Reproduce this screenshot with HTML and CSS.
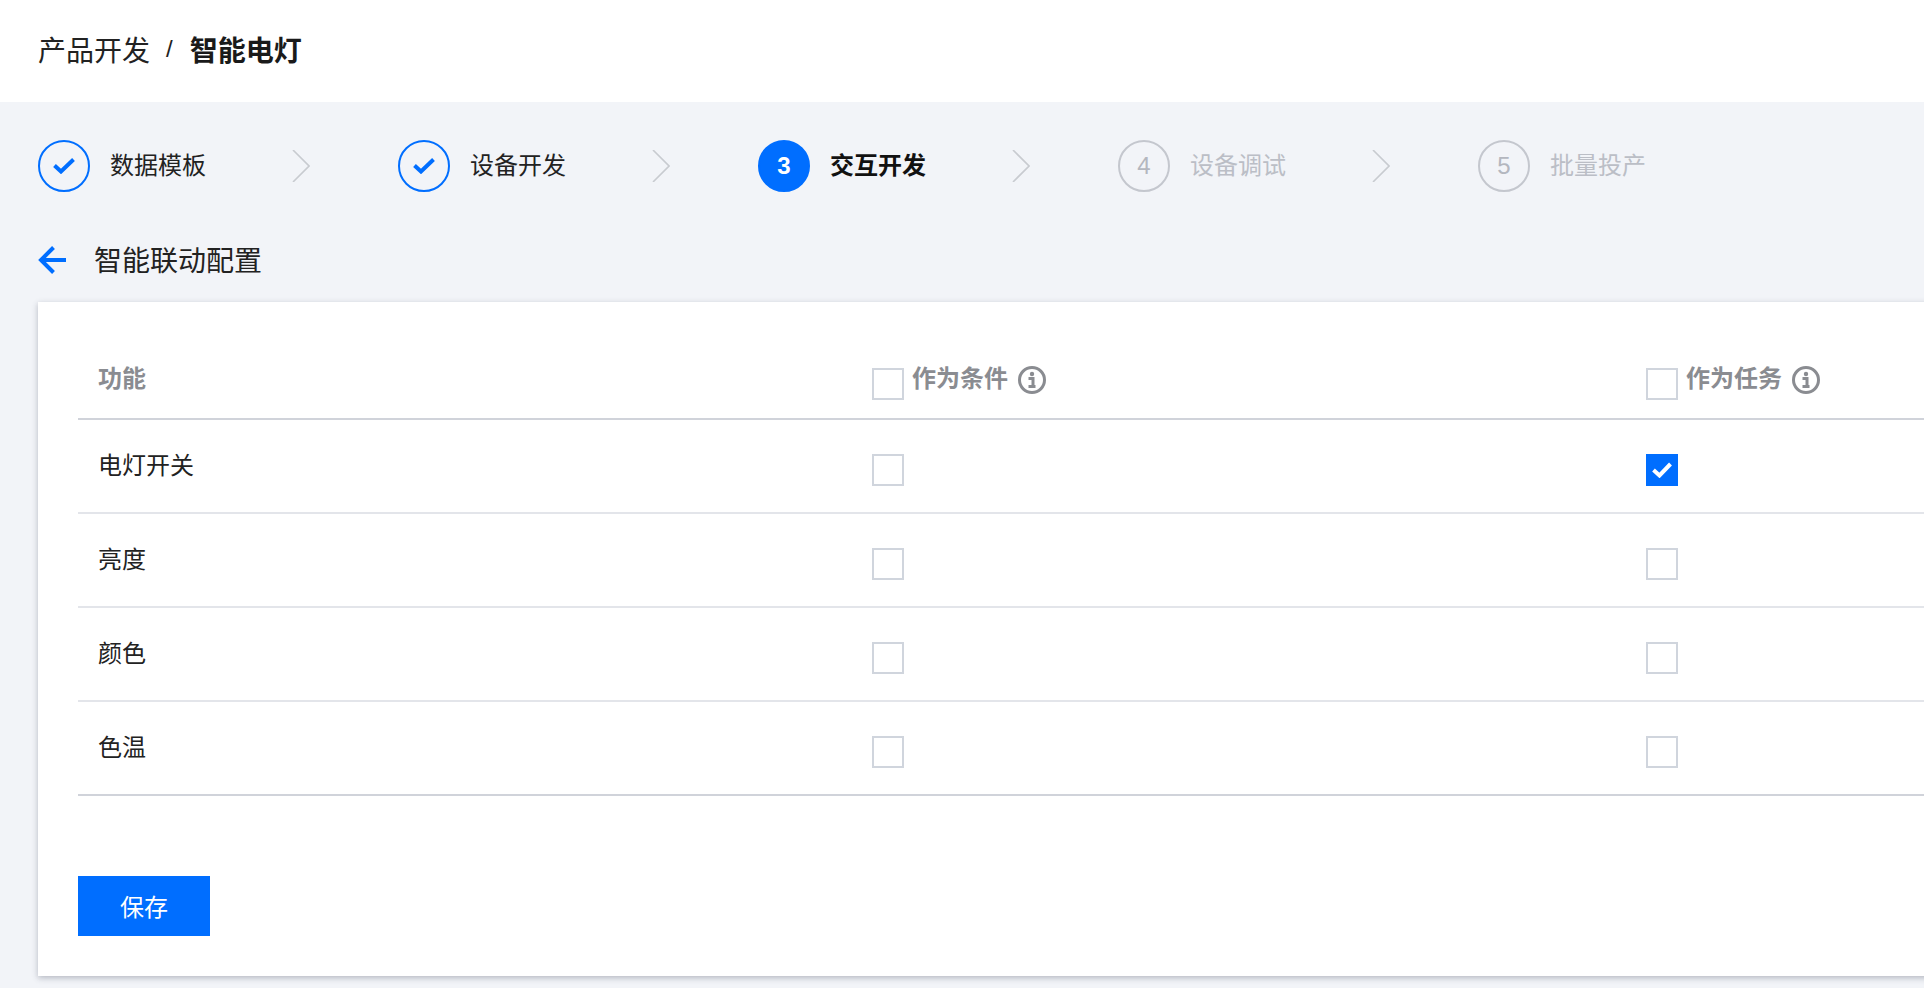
FILE: index.html
```html
<!DOCTYPE html>
<html lang="zh-CN">
<head>
<meta charset="utf-8">
<title>智能联动配置</title>
<link rel="stylesheet" href="styles.css">
</head>
<body>
<header class="topbar">
  <span class="crumb">产品开发</span>
  <span class="crumb-sep">/</span>
  <span class="crumb-current">智能电灯</span>
</header>
<main class="content">
  <ol class="steps">
    <li class="step done">
      <span class="step-mark"><svg class="tick" viewBox="0 0 22 16"><path d="M1.5 7.5l6.5 6L20.5 1.5" /></svg></span>
      <span class="step-label">数据模板</span>
      <svg class="chevron" viewBox="0 0 18 32"><path d="M1 0l16 16L1 32" /></svg>
    </li>
    <li class="step done">
      <span class="step-mark"><svg class="tick" viewBox="0 0 22 16"><path d="M1.5 7.5l6.5 6L20.5 1.5" /></svg></span>
      <span class="step-label">设备开发</span>
      <svg class="chevron" viewBox="0 0 18 32"><path d="M1 0l16 16L1 32" /></svg>
    </li>
    <li class="step active">
      <span class="step-mark">3</span>
      <span class="step-label">交互开发</span>
      <svg class="chevron" viewBox="0 0 18 32"><path d="M1 0l16 16L1 32" /></svg>
    </li>
    <li class="step">
      <span class="step-mark">4</span>
      <span class="step-label">设备调试</span>
      <svg class="chevron" viewBox="0 0 18 32"><path d="M1 0l16 16L1 32" /></svg>
    </li>
    <li class="step">
      <span class="step-mark">5</span>
      <span class="step-label">批量投产</span>
    </li>
  </ol>
  <div class="title-row">
    <svg class="back" viewBox="0 0 28 28"><path d="M28 14H4M15.5 1.5L3 14l12.5 12.5" /></svg>
    <h1 class="title">智能联动配置</h1>
  </div>
  <section class="card">
    <div class="table">
      <div class="row head">
        <div class="cell"><span class="head-label">功能</span></div>
        <div class="cell">
          <span class="box"></span><span class="head-label">作为条件</span>
          <svg class="info" viewBox="0 0 28 28"><circle cx="14" cy="14" r="12.5" /><circle class="dot" cx="14" cy="8" r="2.2" /><path d="M10.5 12.5H15V20.5M10.5 20.5h7" /></svg>
        </div>
        <div class="cell">
          <span class="box"></span><span class="head-label">作为任务</span>
          <svg class="info" viewBox="0 0 28 28"><circle cx="14" cy="14" r="12.5" /><circle class="dot" cx="14" cy="8" r="2.2" /><path d="M10.5 12.5H15V20.5M10.5 20.5h7" /></svg>
        </div>
      </div>
      <div class="row">
        <div class="cell"><span class="name">电灯开关</span></div>
        <div class="cell"><span class="box"></span></div>
        <div class="cell"><span class="box checked"><svg class="box-tick" viewBox="0 0 20 16"><path d="M1.5 8l6 5.5L18.5 2" /></svg></span></div>
      </div>
      <div class="row">
        <div class="cell"><span class="name">亮度</span></div>
        <div class="cell"><span class="box"></span></div>
        <div class="cell"><span class="box"></span></div>
      </div>
      <div class="row">
        <div class="cell"><span class="name">颜色</span></div>
        <div class="cell"><span class="box"></span></div>
        <div class="cell"><span class="box"></span></div>
      </div>
      <div class="row last">
        <div class="cell"><span class="name">色温</span></div>
        <div class="cell"><span class="box"></span></div>
        <div class="cell"><span class="box"></span></div>
      </div>
    </div>
    <button class="save" type="button">保存</button>
  </section>
</main>
</body>
</html>
```

FILE: styles.css
```css
* { box-sizing: border-box; }

html, body {
  margin: 0;
  height: 988px;
  overflow: hidden;
}

body {
  background: #f2f4f8;
  color: #222;
  font-family: "Noto Sans CJK SC", "Liberation Sans", sans-serif;
  font-size: 24px;
}

.topbar {
  height: 102px;
  background: #fff;
  display: flex;
  align-items: center;
  padding: 0 0 4px 38px;
  font-size: 28px;
  line-height: 40px;
}

.crumb { color: #222; }
.crumb-sep { margin: 0 17px 0 16px; font-size: 24px; font-family: "Liberation Sans", sans-serif; }
.crumb-current { font-weight: 700; color: #1a1a1a; }

.content { padding-left: 38px; }

.steps {
  list-style: none;
  margin: 0;
  padding: 38px 0 0;
  display: flex;
}

.step {
  width: 360px;
  flex: none;
  display: flex;
  align-items: center;
  height: 52px;
  color: #bbbec6;
}

.step-mark {
  width: 52px;
  height: 52px;
  border: 2px solid #c4c7ce;
  border-radius: 50%;
  display: flex;
  align-items: center;
  justify-content: center;
  font-family: "Liberation Sans", sans-serif;
  font-weight: 400;
  font-size: 24px;
  color: #b4b7bf;
  flex: none;
}

.step-label {
  margin: 0 0 4px 20px;
  width: 96px;
  flex: none;
  line-height: 34px;
}

.chevron {
  width: 18px;
  height: 32px;
  margin-left: 86px;
  fill: none;
  stroke: #c8cbd0;
  stroke-width: 1.6;
}

.step.done { color: #222; }
.step.done .step-mark { border-color: #006eff; }
.step.active { color: #111; }
.step.active .step-label { font-weight: 700; }
.step.active .step-mark { background: #006eff; border-color: #006eff; color: #fff; font-weight: 700; }

.tick { width: 22px; height: 16px; fill: none; stroke: #006eff; stroke-width: 4; }

.title-row {
  display: flex;
  align-items: center;
  height: 40px;
  margin-top: 48px;
}

.back { width: 28px; height: 28px; fill: none; stroke: #006eff; stroke-width: 4; flex: none; }
.title { margin: 0 0 2px 28px; font-size: 28px; font-weight: 400; line-height: 40px; color: #222; }

.card {
  margin-top: 22px;
  height: 674px;
  width: 1900px;
  background: #fff;
  box-shadow: 0 2px 6px rgba(54, 58, 80, 0.32);
  padding-left: 40px;
}

.table { width: 2322px; }

.row {
  display: grid;
  grid-template-columns: repeat(3, 774px);
  height: 94px;
  border-bottom: 2px solid #e3e5ea;
}

.row.head {
  height: 118px;
  border-bottom-color: #d0d3da;
  color: #8a8c91;
  font-weight: 700;
}

.row.last { border-bottom-color: #d0d3da; }

.cell {
  display: flex;
  align-items: center;
  padding-left: 20px;
}

.row.head .cell { padding-top: 38px; }

.name { margin-bottom: 5px; color: #222; }

.box {
  width: 32px;
  height: 32px;
  border: 2px solid #d0d5dd;
  background: #fff;
  flex: none;
  display: flex;
  align-items: center;
  justify-content: center;
  margin-top: 8px;
}

.row.head .box { margin: 10px 8px 0 0; }

.box.checked { background: #006eff; border-color: #006eff; }
.box-tick { width: 20px; height: 16px; fill: none; stroke: #fff; stroke-width: 4; flex: none; }

.head-label { margin-bottom: 5px; line-height: 34px; }

.info {
  width: 28px;
  height: 28px;
  margin: 2px 0 0 10px;
  fill: none;
  stroke: #8a8c91;
  stroke-width: 3;
}

.info .dot { fill: #8a8c91; stroke: none; }

.save {
  display: block;
  margin-top: 80px;
  width: 132px;
  height: 60px;
  border: 0;
  padding: 0 0 2px;
  background: #006eff;
  color: #fff;
  font: 400 24px "Noto Sans CJK SC", "Liberation Sans", sans-serif;
}
```
